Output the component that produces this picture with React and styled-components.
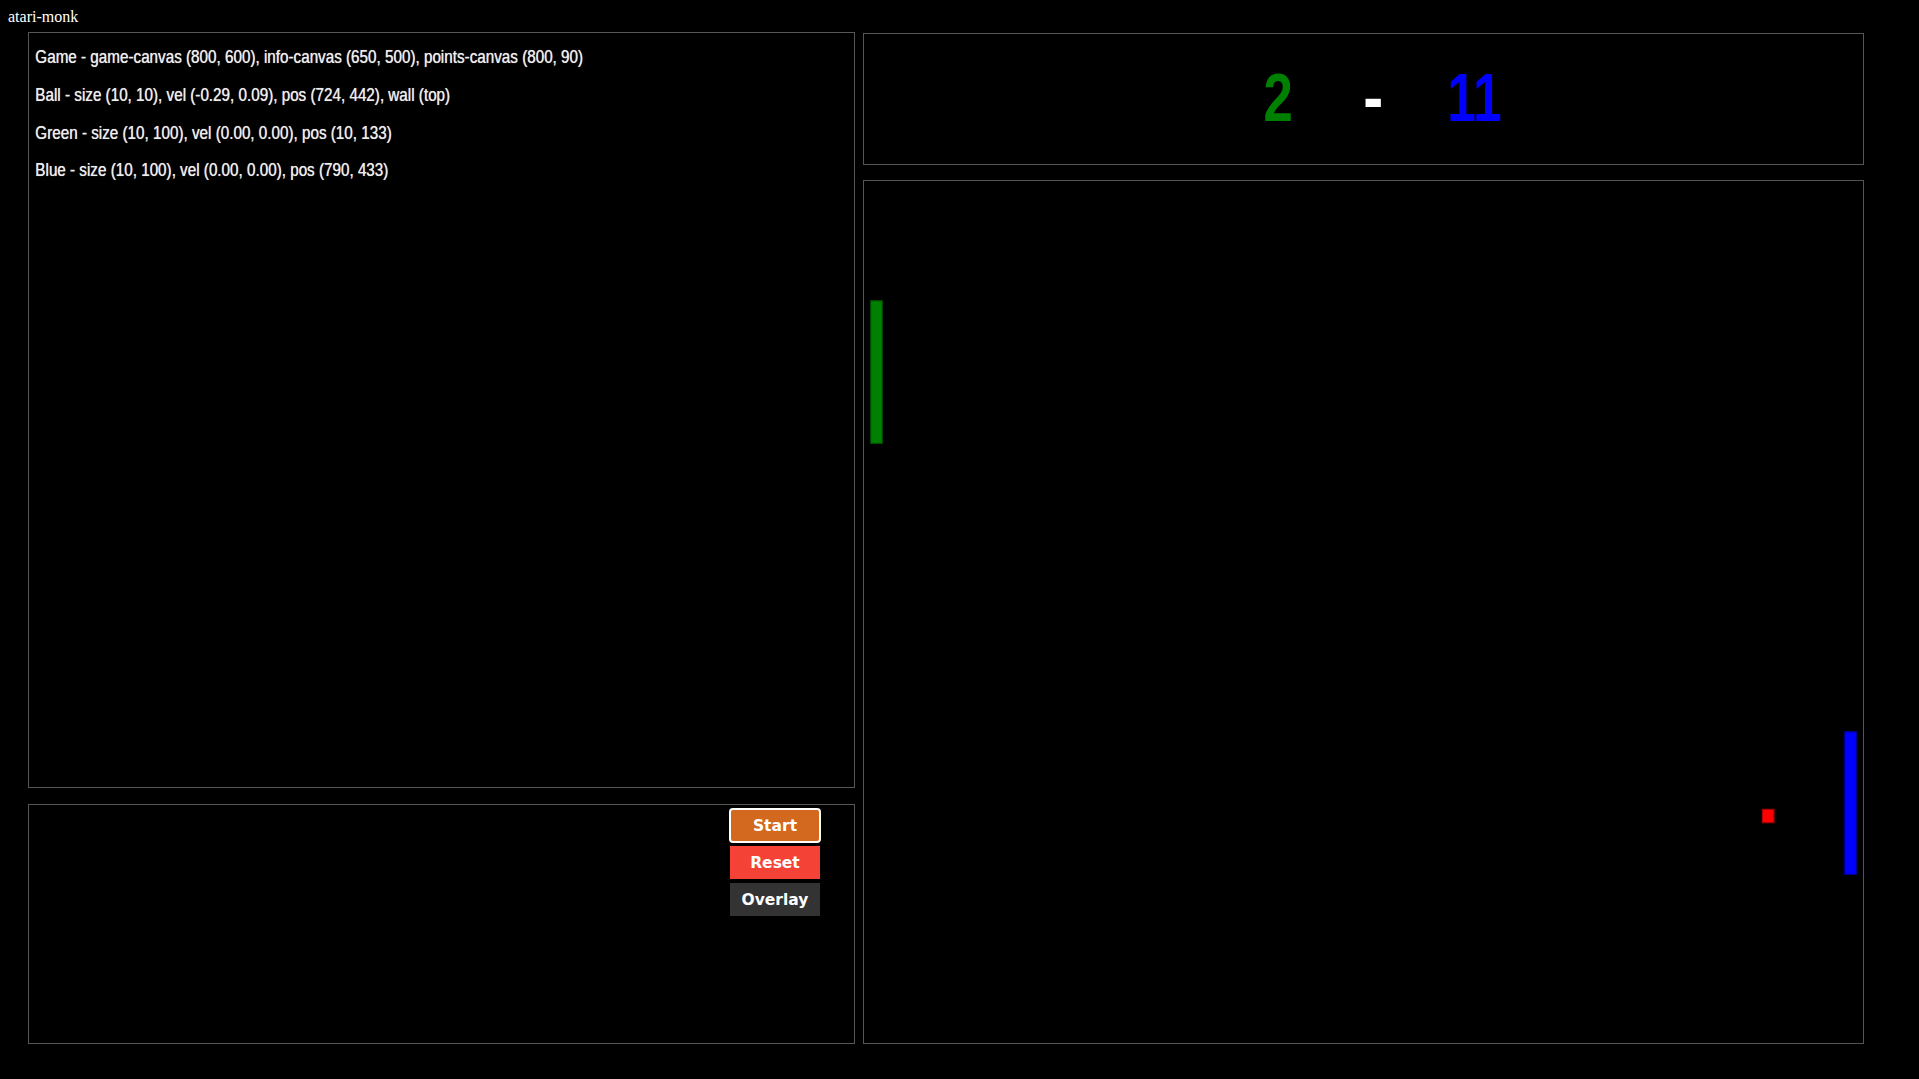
import React from "react";
import styled, { createGlobalStyle } from "styled-components";

const GlobalStyle = createGlobalStyle`
  html, body {
    background: #000;
  }
  body {
    margin: 8px;
    font-family: "Liberation Serif", "Times New Roman", serif;
    color: #fff;
  }
  * { box-sizing: border-box; }
`;

const Title = styled.div`
  font-family: "Liberation Serif", "Times New Roman", serif;
  font-size: 16px;
  line-height: 18px;
  height: 18px;
  color: #fff;
  margin-bottom: 6px;
`;

const Main = styled.div`
  display: flex;
  align-items: flex-start;
  gap: 8px;
  padding-left: 20px;
`;

const Column = styled.div`
  display: flex;
  flex-direction: column;
  gap: ${(p) => p.$gap}px;
  padding-top: ${(p) => p.$offset || 0}px;
`;

const Panel = styled.div`
  position: relative;
  width: ${(p) => p.$w}px;
  height: ${(p) => p.$h}px;
  border: 1px solid #555;
  background: #000;
  overflow: hidden;
`;

/* a drawing surface in canvas units, stretched to fill its panel */
const Surface = styled.div`
  position: relative;
  width: ${(p) => p.$cw}px;
  height: ${(p) => p.$ch}px;
  transform-origin: 0 0;
  transform: scale(${(p) => p.$sx}, ${(p) => p.$sy});
`;

const InfoText = styled.div`
  font-family: "Liberation Sans", Arial, sans-serif;
  font-size: 12px;
  line-height: 25px;
  color: #ededed;
  text-shadow: 0 0 0.5px rgba(255, 255, 255, 0.85);
  padding: 4px 0 0 5px;
  white-space: nowrap;
`;

const InfoLine = styled.div``;

const ScoreRow = styled.div`
  display: flex;
  align-items: baseline;
  padding: 20px 0 0 320px;
  font-family: "Liberation Sans", Arial, sans-serif;
  font-weight: bold;
  font-size: 48px;
  line-height: 48px;
`;

const Score = styled.span`
  display: inline-block;
  color: ${(p) => p.$color};
  margin-left: ${(p) => p.$ml || 0}px;
  transform-origin: 0 0;
  transform: scaleX(${(p) => p.$sx || 1});
`;

const Paddle = styled.div`
  position: absolute;
  left: ${(p) => p.$x}px;
  top: ${(p) => p.$y}px;
  width: 10px;
  height: 100px;
  background: ${(p) => p.$color};
  box-shadow: inset 0 0 0 0.8px rgba(0, 0, 0, 0.35);
`;

const Ball = styled.div`
  position: absolute;
  left: ${(p) => p.$x}px;
  top: ${(p) => p.$y}px;
  width: 10px;
  height: 10px;
  background: #ff0000;
  box-shadow: inset 0 0 0 0.8px rgba(0, 0, 0, 0.35);
`;

const Controls = styled.div`
  display: flex;
  justify-content: flex-end;
  padding: 4px 34px 0 0;
`;

const ButtonStack = styled.div`
  display: flex;
  flex-direction: column;
  gap: 4px;
  width: 90px;
`;

const Button = styled.button`
  width: 90px;
  height: 33px;
  border: none;
  padding: 1px 0 0;
  margin: 0;
  background: ${(p) => p.$bg};
  color: #fff;
  font-family: "DejaVu Sans", Verdana, sans-serif;
  font-weight: bold;
  font-size: 15.5px;
  line-height: 32px;
  cursor: pointer;
  border-radius: ${(p) => (p.$focused ? "3px" : "0")};
  outline: ${(p) => (p.$focused ? "2px solid #fff" : "none")};
  outline-offset: -1px;
`;

export default function App() {
  const info = [
    "Game - game-canvas (800, 600), info-canvas (650, 500), points-canvas (800, 90)",
    "Ball - size (10, 10), vel (-0.29, 0.09), pos (724, 442), wall (top)",
    "Green - size (10, 100), vel (0.00, 0.00), pos (10, 133)",
    "Blue - size (10, 100), vel (0.00, 0.00), pos (790, 433)",
  ];
  return (
    <>
      <GlobalStyle />
      <Title>atari-monk</Title>
      <Main>
        <Column $gap={16}>
          <Panel $w={827} $h={756}>
            <Surface $cw={650} $ch={500} $sx={825 / 650} $sy={754 / 500}>
              <InfoText>
                {info.map((t) => (
                  <InfoLine key={t}>{t}</InfoLine>
                ))}
              </InfoText>
            </Surface>
          </Panel>
          <Panel $w={827} $h={240}>
            <Controls>
              <ButtonStack>
                <Button $bg="#d2691e" $focused>Start</Button>
                <Button $bg="#f44336">Reset</Button>
                <Button $bg="#333333">Overlay</Button>
              </ButtonStack>
            </Controls>
          </Panel>
        </Column>
        <Column $gap={15} $offset={1}>
          <Panel $w={1001} $h={132}>
            <Surface $cw={800} $ch={90} $sx={999 / 800} $sy={130 / 90}>
              <ScoreRow>
                <Score $color="#008000" $sx={0.88}>2</Score>
                <Score $color="#ffffff" $ml={53}>-</Score>
                <Score $color="#0000ff" $ml={51} $sx={0.86}>11</Score>
              </ScoreRow>
            </Surface>
          </Panel>
          <Panel $w={1001} $h={864}>
            <Surface $cw={800} $ch={600} $sx={999 / 800} $sy={862 / 600}>
              <Paddle $color="#008000" $x={5} $y={83} />
              <Paddle $color="#0000ff" $x={785} $y={383} />
              <Ball $x={719} $y={437} />
            </Surface>
          </Panel>
        </Column>
      </Main>
    </>
  );
}
